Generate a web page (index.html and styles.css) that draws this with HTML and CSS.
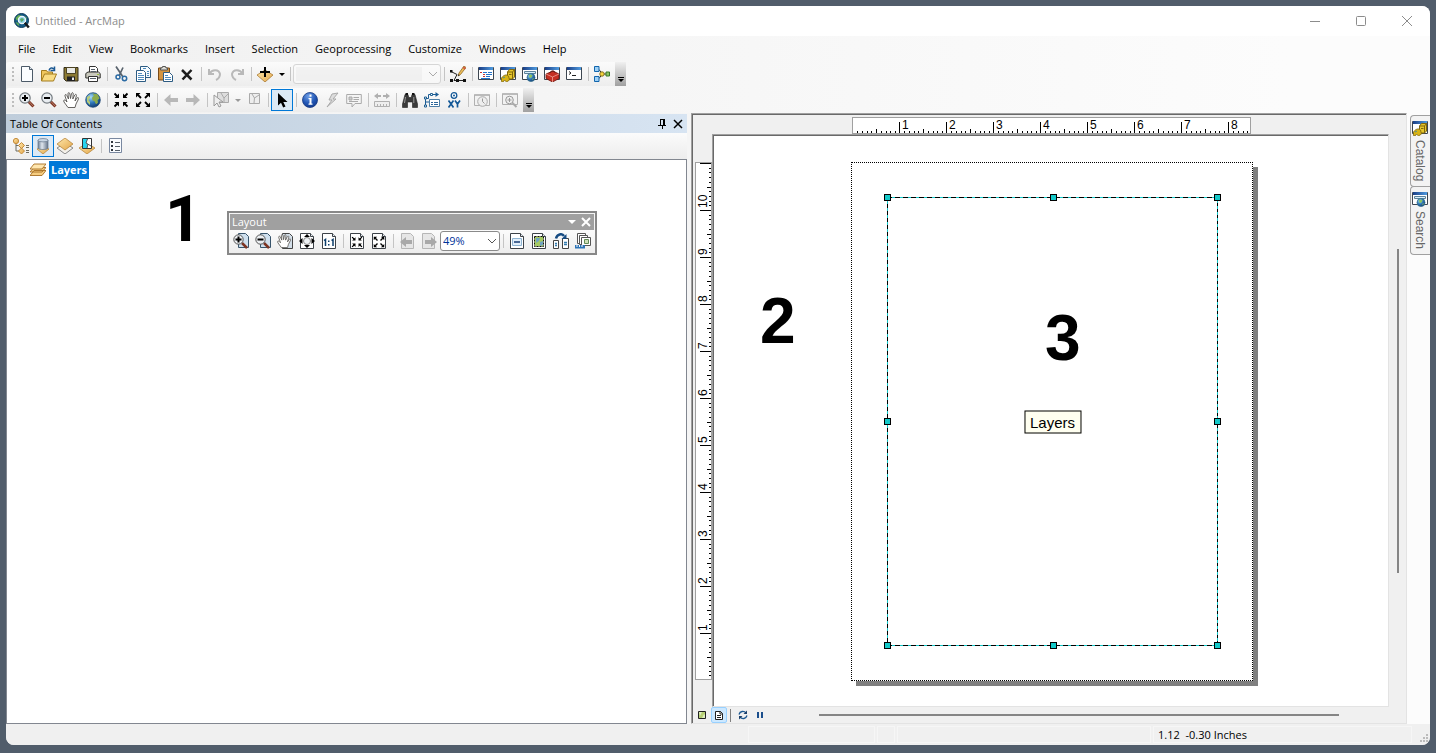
FILE: index.html
```html
<!DOCTYPE html>
<html lang="en">
<head>
<meta charset="utf-8">
<title>Untitled - ArcMap</title>
<link rel="stylesheet" href="styles.css">
</head>
<body>
<svg class="defs" aria-hidden="true">
  <defs>
    <radialGradient id="gGlobe" cx=".35" cy=".3" r=".8"><stop offset="0" stop-color="#a9dcf5"/><stop offset=".5" stop-color="#2f77b8"/><stop offset="1" stop-color="#0c2f66"/></radialGradient>
    <radialGradient id="gInfo" cx=".4" cy=".25" r=".8"><stop offset="0" stop-color="#6f9fe6"/><stop offset=".6" stop-color="#2156b5"/><stop offset="1" stop-color="#12398a"/></radialGradient>
    <linearGradient id="gGold" x2="1" y2="1"><stop offset="0" stop-color="#ffe9ae"/><stop offset="1" stop-color="#e2a548"/></linearGradient>
    <linearGradient id="gBar"><stop offset="0" stop-color="#1c3f86"/><stop offset="1" stop-color="#4f9be0"/></linearGradient>
    <linearGradient id="gCyl"><stop offset="0" stop-color="#6f7f93"/><stop offset=".4" stop-color="#dfe6ee"/><stop offset="1" stop-color="#66758a"/></linearGradient>
    <pattern id="ticksH" width="47" height="15" patternUnits="userSpaceOnUse">
      <path d="M4.500 13v2M9.500 13v2M14.500 13v2M18.500 13v2M23.500 11v4M28.500 13v2M33.500 13v2M37.500 13v2M42.500 13v2M46.500 4v11" stroke="#000" fill="none"/>
    </pattern>
    <pattern id="ticksV" width="15" height="47" y="1" patternUnits="userSpaceOnUse">
      <path d="M4 .5h11M13 5.500h2M13 9.500h2M13 14.500h2M13 19.500h2M11 24.500h4M13 28.500h2M13 33.500h2M13 38.500h2M13 42.500h2" stroke="#000" fill="none"/>
    </pattern>
  </defs>

  <symbol id="arcmap" viewBox="0 0 16 16"><circle cx="7.500" cy="7.500" r="7" fill="#155a86" stroke="#0d3a5a"/><path d="M1.500 5l3-3 3 .5-2 3-3 2zM1.500 9l3 1 1 3-2-1zM11 3l2 2-1 1z" fill="#63ad55"/><circle cx="8" cy="7" r="3.600" fill="#8fd3ea" stroke="#f2f6f8" stroke-width="1.300"/><path d="M6 6l2-1 2 1-1 2-2 1z" fill="#5ba868"/><path d="M10.800 9.800l4 4.700" stroke="#15191d" stroke-width="2.500"/></symbol>
  <symbol id="new" viewBox="0 0 16 16"><path d="M2.500.5h8l3 3v12h-11z" fill="#fbfdff" stroke="#4c5a68"/><path d="M10.500.5v3h3" fill="#dfe8f0" stroke="#4c5a68"/></symbol>
  <symbol id="open" viewBox="0 0 16 16"><path d="M.5 15V4.500h5l1 1.500h5v3" fill="#f0c75e" stroke="#a37c1f"/><path d="M.5 15l3-7h12l-3 7z" fill="#f9dc84" stroke="#a37c1f"/><path d="M8 4.500c1-3 3-3 5-1.500M13.500.500v4h-4" fill="none" stroke="#1d5a94" stroke-width="1.500"/></symbol>
  <symbol id="save" viewBox="0 0 16 16"><path d="M1 1.500h14v13.500H3L1 13z" fill="#8c7a32" stroke="#332c1a"/><path d="M3.500 1.500h9v6h-9z" fill="#e9e9e4" stroke="#4c4424"/><path d="M4 10.500h8V15H4z" fill="#222"/><path d="M9 11.500h2V14H9z" fill="#eee"/></symbol>
  <symbol id="print" viewBox="0 0 16 16"><path d="M4.500 7V.5h6l2 2V7" fill="#fff" stroke="#333"/><path d="M.8 7.500L3 6h10.500l1.700 1.500V12H.8z" fill="#c9c9bd" stroke="#30302c"/><path d="M3.500 10.500h9v5h-9z" fill="#fff" stroke="#333"/><path d="M5 12.500h6M6 3.500h4M6 5.500h5" stroke="#57606a"/><path d="M12 8h2v1h-2z" fill="#9bc43c"/></symbol>
  <symbol id="cut" viewBox="0 0 16 16"><path d="M3 .5l7 10.500M10 1.500L6 10" stroke="#59636d" stroke-width="1.700"/><circle cx="5" cy="11" r="2" fill="none" stroke="#2a6aa3" stroke-width="1.500"/><circle cx="11.500" cy="12.500" r="2.200" fill="none" stroke="#2a6aa3" stroke-width="1.500"/></symbol>
  <symbol id="copy" viewBox="0 0 16 16"><path d="M5.500.5h7l3 3v8h-10z" fill="#f5fbff" stroke="#2d5c83"/><path d="M1.500 4.500h7l2 2v9h-9z" fill="#fff" stroke="#2d5c83"/><path d="M3 7.500h4M3 9.500h6M3 11.500h6M3 13.500h6M8 2.500h3M12 5.500h2M12 7.500h2M12 9.500h2" stroke="#4e8bbd"/></symbol>
  <symbol id="paste" viewBox="0 0 16 16"><path d="M1.500 2h11v12h-11z" fill="#d39441" stroke="#794b18"/><path d="M3.500 4h7V2H9L8.500.5h-3L5 2H3.500z" fill="#dcdcd6" stroke="#555"/><path d="M6.500 6.500h6l3 3v6h-9z" fill="#fff" stroke="#2d5c83"/><path d="M8 9.500h3M8 11.500h6M8 13.500h6" stroke="#4e8bbd"/></symbol>
  <symbol id="delete" viewBox="0 0 16 16"><path d="M3 4l9.500 9.500M12.500 4L3.500 13.500" stroke="#1d1d1d" stroke-width="2.500"/></symbol>
  <symbol id="undo" viewBox="0 0 16 16"><path d="M2 3v5h5M2.500 7.500C5 3 12 3 13 8c0 3-2 5-4 6" fill="none" stroke="#b9b9b9" stroke-width="2"/></symbol>
  <symbol id="redo" viewBox="0 0 16 16"><path d="M14 3v5H9M13.500 7.500C11 3 4 3 3 8c0 3 2 5 4 6" fill="none" stroke="#b9b9b9" stroke-width="2"/></symbol>
  <symbol id="add" viewBox="0 0 16 16"><path d="M0 9l8-5 8 5-8 7z" fill="url(#gGold)" stroke="#a97932" stroke-width=".8"/><path d="M8 1v10M3 6h10" stroke="#000" stroke-width="2"/></symbol>
  <symbol id="editor" viewBox="0 0 16 16"><path d="M1 5.500l6 3L4 14.500h11" stroke="#222" fill="none"/><path d="M0 4h2.500v2.500H0zM0 13h3v3H0zM6 13h3v3H6zM13 13h3v3h-3z" fill="#111"/><path d="M8 10l1-3 5-7 2 1.500-5.500 7z" fill="#edbd58" stroke="#8f6a2a" stroke-width=".8"/><path d="M13.500.5l2.500 1.500-1 1.500-2.500-1.500z" fill="#d05a43"/><path d="M8 10l.5-1.800 1.300 1z" fill="#222"/></symbol>
  <symbol id="win" viewBox="0 0 16 16"><path d="M.5 1.500h15v12H.5z" fill="#fff" stroke="#3d4650"/><path d="M1 1h14v3H1z" fill="url(#gBar)"/></symbol>
  <symbol id="toc" viewBox="0 0 16 16"><use href="#win"/><path d="M2 6.500h2M5 8.500h2M5 10.500h2" stroke="#c33"/><path d="M5 6.500h4M10 6.500h4M8 8.500h6M8 10.500h4M3 12.500h9" stroke="#2472c8"/></symbol>
  <symbol id="catalog" viewBox="0 0 16 16"><use href="#win"/><path d="M7.500 6l2-2.500h5V11l-2 2h-5z" fill="#e5c62c" stroke="#80660b"/><path d="M7.500 6h5v7M12.500 6l2-2.500M9 8.500h2.500" fill="none" stroke="#80660b"/><path d="M1.500 12c2-3 5-4 7-2l1 4-3 2-2-2-1.500 2-1.500-.5z" fill="#d8b415" stroke="#80660b" stroke-width=".8"/><path d="M3 12l2-1" stroke="#4b8e94"/></symbol>
  <symbol id="search" viewBox="0 0 16 16"><use href="#win"/><path d="M2.500 5.500h11v2h-11z" fill="#d9effb" stroke="#5d8299"/><circle cx="9" cy="11.500" r="4" fill="url(#gGlobe)" stroke="#36718e" stroke-width=".8"/><path d="M7 9l2-.5 1.500 1-1 2-2 .5zM10 13l2-1-1 2z" fill="#8dc35c"/></symbol>
  <symbol id="toolbox" viewBox="0 0 16 16"><use href="#win"/><path d="M2 8l7-3 6 3v4.500L8.500 16 2 12.500z" fill="#c52f22" stroke="#6f1610" stroke-width=".8"/><path d="M2 8l6.500 3L15 8M8.500 11v5" stroke="#f2a294" stroke-width=".8" fill="none"/><path d="M6 7c0-2 4-3 5-.5" fill="none" stroke="#591009"/></symbol>
  <symbol id="python" viewBox="0 0 16 16"><use href="#win"/><path d="M3 5.500l2 1.500-2 1.500M6 9.500h4" fill="none" stroke="#222"/></symbol>
  <symbol id="model" viewBox="0 0 16 16"><path d="M3 3.500h2l3 4M3 12.500h2l3-4M8 8h6" stroke="#333" fill="none"/><path d="M.5.500h4.500v5H.5zM.5 10.500H5v5H.5z" fill="#9ed0f5" stroke="#1266ad"/><circle cx="8" cy="8" r="2.200" fill="#f6d33c" stroke="#80701e"/><path d="M12 6h3.500v4H12z" fill="#8cc466" stroke="#367628"/></symbol>

  <symbol id="lens" viewBox="0 0 16 16"><path d="M9.500 9.500l5 5" stroke="#7d3422" stroke-width="3"/><path d="M10 9.500l4.500 5" stroke="#c6907b" stroke-width=".8"/><circle cx="6" cy="6" r="5.200" fill="#e9edf1" stroke="#747b80" stroke-width="1.200"/></symbol>
  <symbol id="zoomin" viewBox="0 0 16 16"><use href="#lens"/><path d="M6 3v6M3 6h6" stroke="#000" stroke-width="2"/></symbol>
  <symbol id="zoomout" viewBox="0 0 16 16"><use href="#lens"/><path d="M3 6h6" stroke="#000" stroke-width="2"/></symbol>
  <symbol id="pan" viewBox="0 0 16 16"><path d="M5 15.500L1 10c-1-2 .5-2.500 1.500-1.500L4 10 2 4c-.3-1.800 1.200-2 1.800-.6L5.500 7 5 1.800C5 .2 6.500.2 6.800 1.800L7.500 6.500 8.500 1.500C9 .2 10.400.5 10.200 2L9.800 7l2-4c.8-1.200 2-.6 1.600.7L12 9l2-3c1-1 2-.2 1.500 1L13 12l-1 3.500z" fill="#fff" stroke="#54514e" stroke-width=".9"/></symbol>
  <symbol id="globe" viewBox="0 0 16 16"><circle cx="8" cy="8" r="7.300" fill="url(#gGlobe)" stroke="#234c78" stroke-width=".8"/><path d="M7.500 1.500l5 .8 2 4-2 2 .5 2.500-2 1.500-1.500-3-2-1-.5-2.500 2-2z" fill="#8bab4b"/><path d="M2 5l3-1.500v2L3.500 8l1.500 2v3L2 10z" fill="#b8cc78"/></symbol>
  <symbol id="shrink" viewBox="0 0 16 16"><path d="M1.500 1.500l3 3M14.500 1.500l-3 3M1.500 14.500l3-3M14.500 14.500l-3-3" stroke="#000" stroke-width="1.800"/><path d="M6 1.500V6H1.500zM10 1.500V6h4.500zM6 14.500V10H1.500zM10 14.500V10h4.500z"/></symbol>
  <symbol id="grow" viewBox="0 0 16 16"><path d="M3 3l3 3M13 3l-3 3M3 13l3-3M13 13l-3-3" stroke="#000" stroke-width="1.800"/><path d="M1 1h4.500L1 5.500zM15 1h-4.500L15 5.500zM1 15h4.500L1 10.500zM15 15h-4.500l4.500-4.500z"/></symbol>
  <symbol id="back" viewBox="0 0 16 16"><path d="M1 8l6.500-6v4H15v4H7.500v4z" fill="#b8b8b8"/></symbol>
  <symbol id="fwd" viewBox="0 0 16 16"><path d="M15 8L8.500 2v4H1v4h7.500v4z" fill="#b8b8b8"/></symbol>
  <symbol id="selfeat" viewBox="0 0 16 16"><path d="M4.500.5h11v10h-11z" fill="#ddd" stroke="#aaa"/><path d="M8 1l3 5 4-4M11 6v4" fill="none" stroke="#aaa"/><path d="M1 3v11l3-3 2 4 2-1-2-4h4z" fill="#eee" stroke="#999"/></symbol>
  <symbol id="clearsel" viewBox="0 0 16 16"><path d="M3.500 1.500h10v10h-10z" fill="#eee" stroke="#aaa"/><path d="M6 2l2.500 4L13 3M8.500 6L8 11" fill="none" stroke="#aaa"/></symbol>
  <symbol id="arrow" viewBox="0 0 16 16"><path d="M4 1v12.500l3-2.700 2.200 4.700 2.300-1-2.200-4.600h4.200z" fill="#000"/></symbol>
  <symbol id="info" viewBox="0 0 16 16"><circle cx="8" cy="8" r="7.500" fill="url(#gInfo)" stroke="#173a83" stroke-width=".8"/><path d="M7.500 2.500h2v2.200h-2zM6.500 6h3v5.500h1v1.300h-4v-1.300h1V7.300h-1z" fill="#fff"/></symbol>
  <symbol id="bolt" viewBox="0 0 16 16"><path d="M14 1L8 2 5 8h3l-5 7 9-8H9z" fill="#ddd" stroke="#aaa"/></symbol>
  <symbol id="popup" viewBox="0 0 16 16"><path d="M.7 2.500h14.600v9H9l-3 3.500v-3.500H.7z" fill="#f4f4f4" stroke="#aaa"/><path d="M3 5h3v3H3zM7.500 5.500H13M7.500 7.500H13M3 9.500h9" stroke="#aaa" fill="#ccc"/></symbol>
  <symbol id="measure" viewBox="0 0 16 16"><path d="M.5 9.500h15v5H.5z" fill="#eee" stroke="#b0b0b0"/><path d="M3.500 12v2M6.500 12v2M9.500 12v2M12.500 12v2M1 4h5M10 4h5" stroke="#b0b0b0"/><path d="M4 1L0 4l4 3zM12 1l4 3-4 3zM4 3h3v2H4zM9 3h3v2H9z" fill="#b0b0b0"/></symbol>
  <symbol id="find" viewBox="0 0 16 16"><path d="M3 2.500h3l.8 3h2.400l.8-3h3l2.500 9.500v3.500h-5V10h-5v5.500h-5V12z" fill="#3a3a3a" stroke="#222" stroke-width=".6"/><path d="M3.500 1h2.500v2H3.500zM10 1h2.500v2H10z" fill="#111"/><path d="M2.500 11l1-6M11.800 11V5" stroke="#9a9a9a"/></symbol>
  <symbol id="route" viewBox="0 0 16 16"><path d="M1.500 14V6.500h3V2.500h8M2 10h3" fill="none" stroke="#1c5d95"/><path d="M11.500 0l3.500 2.500-3.500 2.500z" fill="#1c5d95"/><path d="M.5 5h2v2h-2zM6.500 1.500h2v2h-2zM.5 13h2v2h-2z" fill="#fff" stroke="#1f5f92"/><path d="M5.500 7.500h10v7h-10z" fill="#fff" stroke="#4d7ea6"/><path d="M7 10.500h2M10 10.500h4M7 12.500h2M10 12.500h4" stroke="#2b669a"/></symbol>
  <symbol id="gotoxy" viewBox="0 0 16 16"><circle cx="8" cy="3.500" r="2.800" fill="#fff" stroke="#155997" stroke-width="1.300"/><circle cx="8" cy="3.500" r="1" fill="#155997"/><path d="M2.500 8.500l5 7M7.500 8.500l-5 7M9 8.500l2.500 3.500 2.500-3.500M11.500 12v3.500" fill="none" stroke="#155997" stroke-width="1.700"/></symbol>
  <symbol id="clock" viewBox="0 0 16 16"><path d="M.5 2.500h15v11H.5z" fill="#f2f2f2" stroke="#b0b0b0"/><path d="M1 2h14v2H1z" fill="#bbb"/><circle cx="8.500" cy="9.500" r="4.800" fill="#eee" stroke="#aaa"/><path d="M8.500 6.500v3l2 2" fill="none" stroke="#999"/></symbol>
  <symbol id="viewer" viewBox="0 0 16 16"><path d="M.5 1.500h15v11H.5z" fill="#f2f2f2" stroke="#b0b0b0"/><path d="M1 1h14v2H1z" fill="#bbb"/><circle cx="7.500" cy="8" r="3.800" fill="#eee" stroke="#999"/><path d="M7.500 6v4M5.500 8h4" stroke="#999"/><path d="M10.500 11l4 4" stroke="#aaa" stroke-width="2"/></symbol>

  <symbol id="tocdraw" viewBox="0 0 16 16"><path d="M3 4v9h5M3 7.500h4M13 7.500h3M13 9.500h3M13 12.500h3M13 14.500h3" stroke="#6c6c60" fill="none"/><circle cx="3" cy="3" r="2.600" fill="url(#gGold)" stroke="#c48b3a"/><path d="M8.500 4.500l3 3-3 3-3-3zM8.500 10l3 3-3 3-3-3z" fill="url(#gGold)" stroke="#c48b3a"/></symbol>
  <symbol id="tocsrc" viewBox="0 0 16 16"><path d="M2 11l6-3 6 3-6 5z" fill="url(#gGold)" stroke="#b9883d" stroke-width=".8"/><path d="M3 2v8c0 2 10 2 10 0V2z" fill="url(#gCyl)" stroke="#66758a" stroke-width=".7"/><ellipse cx="8" cy="2.200" rx="5" ry="1.700" fill="#c9d6e4" stroke="#66758a" stroke-width=".7"/></symbol>
  <symbol id="tocvis" viewBox="0 0 16 16"><path d="M0 10l8-5 8 5-8 6z" fill="#f4f1ea" stroke="#888"/><path d="M0 6l8-6 8 6-8 6z" fill="url(#gGold)" stroke="#b9883d" stroke-width=".8"/></symbol>
  <symbol id="tocsel" viewBox="0 0 16 16"><path d="M0 10l8-5 8 5-8 6z" fill="url(#gGold)" stroke="#b9883d" stroke-width=".8"/><path d="M3.500.5h9v10h-9z" fill="#fff" stroke="#333"/><path d="M4 1h4.500L7 5l2 1-1 4H4z" fill="#26d3ee"/><path d="M8.500 1L7 5l5 3M9 6l-1 4" fill="none" stroke="#555"/></symbol>
  <symbol id="options" viewBox="0 0 16 16"><path d="M2.500.5h12v14h-12z" fill="#fafcff" stroke="#7988a0"/><path d="M4 3h2v2H4zM4 7h2v2H4zM4 11h2v2H4z" fill="#30363e"/><path d="M8 4.500h5M8 8.500h5M8 12.500h5" stroke="#58616c"/></symbol>
  <symbol id="layers" viewBox="0 0 16 16"><path d="M4 8.500h12l-4 5H0zM4 5.500h12l-4 4.500H0z" fill="#f6cd80" stroke="#a76f25" stroke-width=".9"/><path d="M4 2h12l-4 5H0z" fill="#ffe6ae" stroke="#a76f25" stroke-width=".9"/></symbol>

  <symbol id="sheet" viewBox="0 0 16 16"><path d="M1.500.5h10l3 3v12h-13z" fill="#fff" stroke="#3d4248"/><path d="M11.500.5v3h3" fill="#e8eef3" stroke="#3d4248"/></symbol>
  <symbol id="lzoomin" viewBox="0 0 16 16"><path d="M5.500.5h7l3 3v11h-10z" fill="#cfe0ee" stroke="#38546b"/><path d="M9 10l5 5" stroke="#7d3422" stroke-width="2.500"/><circle cx="5.500" cy="6.500" r="4.700" fill="#eceff2" stroke="#555"/><path d="M5.500 3.500v6M2.500 6.500h6" stroke="#000" stroke-width="2"/></symbol>
  <symbol id="lzoomout" viewBox="0 0 16 16"><path d="M5.500.5h7l3 3v11h-10z" fill="#cfe0ee" stroke="#38546b"/><path d="M9 10l5 5" stroke="#7d3422" stroke-width="2.500"/><circle cx="5.500" cy="6.500" r="4.700" fill="#eceff2" stroke="#555"/><path d="M2.500 6.500h6" stroke="#000" stroke-width="2"/></symbol>
  <symbol id="lpan" viewBox="0 0 16 16"><path d="M5.500.5h7l3 3v12h-10z" fill="#d3dee8" stroke="#444"/><use href="#pan" x="0" y="1" width="14" height="14"/></symbol>
  <symbol id="lfull" viewBox="0 0 16 16"><use href="#sheet"/><path d="M8 1l3 3H5zM8 15l3-3H5zM0 8l3.500-3v6zM16 8l-3.500-3v6z" fill="#000"/><circle cx="8" cy="8" r="3.500" fill="#eef2f5" stroke="#888"/></symbol>
  <symbol id="lone" viewBox="0 0 16 16"><use href="#sheet"/><path d="M3 7.500L4.500 6.500V13M10.500 7.500L12 6.500V13" fill="none" stroke="#0b3c6a" stroke-width="1.500"/><path d="M7 7.500h1.500V9H7zM7 11h1.500v1.500H7z" fill="#0b3c6a"/></symbol>
  <symbol id="lshrink" viewBox="0 0 16 16"><use href="#sheet"/><use href="#shrink" x="2" y="3" width="12" height="12"/></symbol>
  <symbol id="lgrow" viewBox="0 0 16 16"><use href="#sheet"/><use href="#grow" x="2" y="3" width="12" height="12"/></symbol>
  <symbol id="lback" viewBox="0 0 16 16"><path d="M2.500.5h9l3 3v12h-12z" fill="#e6e6e6" stroke="#b6b6b6"/><path d="M1 9l6-5v3h6v4H7v3z" fill="#a9a9a9"/></symbol>
  <symbol id="lfwd" viewBox="0 0 16 16"><path d="M1.500.5h9l3 3v12h-12z" fill="#e6e6e6" stroke="#b6b6b6"/><path d="M16 9l-6-5v3H4v4h6v3z" fill="#a9a9a9"/></symbol>
  <symbol id="ldraft" viewBox="0 0 16 16"><use href="#sheet"/><path d="M3.500 5.500h9v7h-9z" fill="#e2effa" stroke="#8fb4d2"/><path d="M5 9h6" stroke="#153a73" stroke-width="1.500"/></symbol>
  <symbol id="lfocus" viewBox="0 0 16 16"><use href="#sheet"/><path d="M3.500 3.500h9v10h-9z" fill="#a5ca62" stroke="#111" stroke-dasharray="2 1"/><path d="M5 5h4l-1 3-3 2zM9 9l3-1v4l-3 1z" fill="#71a4bf"/></symbol>
  <symbol id="lchange" viewBox="0 0 16 16"><path d="M.5 7.500h5v8h-5zM9.500 5.500h6v10h-6z" fill="#fff" stroke="#444"/><path d="M2 10.500h2M2 12.500h2M11 9.500h3M11 11.500h3" stroke="#357cae" stroke-width="1.500"/><path d="M3 5.500C4 1 9 0 11 3" fill="none" stroke="#174c83" stroke-width="2.500"/><path d="M13.500 1v5H8.500z" fill="#174c83"/></symbol>
  <symbol id="lpages" viewBox="0 0 16 16"><path d="M2.500.5h8v10h-8z" fill="#fff" stroke="#555"/><path d="M4.500 2.500h8v9h-8z" fill="#fff" stroke="#555"/><path d="M6.500 4.500h9v8h-9z" fill="#fff" stroke="#555"/><path d="M9.500 6.500h4v4h-4z" fill="#cfe0b8" stroke="#638a54"/><path d="M0 12h10v3.500H0z" fill="#2e75b7"/><path d="M2 12v2M4.500 12v2M7 12v2" stroke="#fff"/></symbol>
  <symbol id="chev" viewBox="0 0 10 10"><path d="M1 3l4 4 4-4" fill="none" stroke="currentColor"/></symbol>
</svg>

<div class="window">
  <header class="titlebar">
    <svg class="icon"><use href="#arcmap"/></svg>
    <h1 class="title">Untitled - ArcMap</h1>
    <div class="winbuttons">
      <button class="winbtn" aria-label="Minimize"><svg viewBox="0 0 12 12"><path d="M1 6.500h10"/></svg></button>
      <button class="winbtn" aria-label="Maximize"><svg viewBox="0 0 12 12"><rect x="1.500" y="1.500" width="9" height="9" rx="1"/></svg></button>
      <button class="winbtn" aria-label="Close"><svg viewBox="0 0 12 12"><path d="M1 1l10 10M11 1L1 11"/></svg></button>
    </div>
  </header>

  <div class="chrome">
    <nav class="menubar">
      <button>File</button><button>Edit</button><button>View</button><button>Bookmarks</button><button>Insert</button><button>Selection</button><button>Geoprocessing</button><button>Customize</button><button>Windows</button><button>Help</button>
    </nav>

    <div class="toolbar" role="toolbar" aria-label="Standard">
      <span class="grip"></span>
      <button class="tool" aria-label="New"><svg class="icon"><use href="#new"/></svg></button>
      <button class="tool" aria-label="Open"><svg class="icon"><use href="#open"/></svg></button>
      <button class="tool" aria-label="Save"><svg class="icon"><use href="#save"/></svg></button>
      <button class="tool" aria-label="Print"><svg class="icon"><use href="#print"/></svg></button>
      <span class="sep"></span>
      <button class="tool" aria-label="Cut"><svg class="icon"><use href="#cut"/></svg></button>
      <button class="tool" aria-label="Copy"><svg class="icon"><use href="#copy"/></svg></button>
      <button class="tool" aria-label="Paste"><svg class="icon"><use href="#paste"/></svg></button>
      <button class="tool" aria-label="Delete"><svg class="icon"><use href="#delete"/></svg></button>
      <span class="sep"></span>
      <button class="tool" aria-label="Undo"><svg class="icon"><use href="#undo"/></svg></button>
      <button class="tool" aria-label="Redo"><svg class="icon"><use href="#redo"/></svg></button>
      <span class="sep"></span>
      <button class="tool" aria-label="Add data"><svg class="icon"><use href="#add"/></svg></button>
      <button class="drop" aria-label="Add data options"></button>
      <span class="sep"></span>
      <div class="combo scale"><select aria-label="Map scale" disabled><option></option></select><svg><use href="#chev"/></svg></div>
      <span class="sep"></span>
      <button class="tool" aria-label="Editor toolbar"><svg class="icon"><use href="#editor"/></svg></button>
      <span class="sep"></span>
      <button class="tool" aria-label="Table of contents"><svg class="icon"><use href="#toc"/></svg></button>
      <button class="tool" aria-label="Catalog window"><svg class="icon"><use href="#catalog"/></svg></button>
      <button class="tool" aria-label="Search window"><svg class="icon"><use href="#search"/></svg></button>
      <button class="tool" aria-label="Toolbox"><svg class="icon"><use href="#toolbox"/></svg></button>
      <button class="tool" aria-label="Python"><svg class="icon"><use href="#python"/></svg></button>
      <span class="sep"></span>
      <button class="tool" aria-label="Model builder"><svg class="icon"><use href="#model"/></svg></button>
      <button class="overflow" aria-label="Toolbar options"></button>
    </div>

    <div class="toolbar" role="toolbar" aria-label="Tools">
      <span class="grip"></span>
      <button class="tool" aria-label="Zoom in"><svg class="icon"><use href="#zoomin"/></svg></button>
      <button class="tool" aria-label="Zoom out"><svg class="icon"><use href="#zoomout"/></svg></button>
      <button class="tool" aria-label="Pan"><svg class="icon"><use href="#pan"/></svg></button>
      <button class="tool" aria-label="Full extent"><svg class="icon"><use href="#globe"/></svg></button>
      <span class="sep"></span>
      <button class="tool" aria-label="Fixed zoom in"><svg class="icon"><use href="#shrink"/></svg></button>
      <button class="tool" aria-label="Fixed zoom out"><svg class="icon"><use href="#grow"/></svg></button>
      <span class="sep"></span>
      <button class="tool" aria-label="Back"><svg class="icon"><use href="#back"/></svg></button>
      <button class="tool" aria-label="Forward"><svg class="icon"><use href="#fwd"/></svg></button>
      <span class="sep"></span>
      <button class="tool" aria-label="Select features"><svg class="icon"><use href="#selfeat"/></svg></button>
      <button class="drop dim" aria-label="Select options"></button>
      <button class="tool" aria-label="Clear selection"><svg class="icon"><use href="#clearsel"/></svg></button>
      <span class="sep"></span>
      <button class="tool on" aria-label="Select elements"><svg class="icon"><use href="#arrow"/></svg></button>
      <span class="sep"></span>
      <button class="tool" aria-label="Identify"><svg class="icon"><use href="#info"/></svg></button>
      <button class="tool" aria-label="Hyperlink"><svg class="icon"><use href="#bolt"/></svg></button>
      <button class="tool" aria-label="HTML popup"><svg class="icon"><use href="#popup"/></svg></button>
      <span class="sep"></span>
      <button class="tool" aria-label="Measure"><svg class="icon"><use href="#measure"/></svg></button>
      <span class="sep"></span>
      <button class="tool" aria-label="Find"><svg class="icon"><use href="#find"/></svg></button>
      <button class="tool" aria-label="Find route"><svg class="icon"><use href="#route"/></svg></button>
      <button class="tool" aria-label="Go to XY"><svg class="icon"><use href="#gotoxy"/></svg></button>
      <span class="sep"></span>
      <button class="tool" aria-label="Time slider"><svg class="icon"><use href="#clock"/></svg></button>
      <span class="sep"></span>
      <button class="tool" aria-label="Viewer window"><svg class="icon"><use href="#viewer"/></svg></button>
      <button class="overflow" aria-label="Toolbar options"></button>
    </div>
  </div>

  <main class="work">
    <section class="contents">
      <header class="panelhead">
        <h2>Table Of Contents</h2>
        <button aria-label="Pin"><svg viewBox="0 0 10 10"><path d="M3.500 1v5M6.500 1v5M7.500 1v5M3 .5h5M1 6.500h8M5.500 7v3"/></svg></button>
        <button aria-label="Close"><svg viewBox="0 0 10 10"><path d="M1 1l8 8M9 1L1 9" stroke-width="1.500"/></svg></button>
      </header>
      <div class="contentbar" role="toolbar" aria-label="Contents views">
        <button class="tool" aria-label="List by drawing order"><svg class="icon"><use href="#tocdraw"/></svg></button>
        <button class="tool on" aria-label="List by source"><svg class="icon"><use href="#tocsrc"/></svg></button>
        <button class="tool" aria-label="List by visibility"><svg class="icon"><use href="#tocvis"/></svg></button>
        <button class="tool" aria-label="List by selection"><svg class="icon"><use href="#tocsel"/></svg></button>
        <span class="sep"></span>
        <button class="tool" aria-label="Options"><svg class="icon"><use href="#options"/></svg></button>
      </div>
      <ul class="tree">
        <li><svg class="icon"><use href="#layers"/></svg><span class="picked">Layers</span></li>
      </ul>
      <span class="note note-one">1</span>
      <section class="floatbar">
        <header><h2>Layout</h2><button class="drop light" aria-label="Options"></button><button class="shut" aria-label="Close"><svg viewBox="0 0 10 10"><path d="M1 1l8 8M9 1L1 9"/></svg></button></header>
        <div class="floattools" role="toolbar" aria-label="Layout">
          <button class="tool" aria-label="Zoom in"><svg class="icon"><use href="#lzoomin"/></svg></button>
          <button class="tool" aria-label="Zoom out"><svg class="icon"><use href="#lzoomout"/></svg></button>
          <button class="tool" aria-label="Pan"><svg class="icon"><use href="#lpan"/></svg></button>
          <button class="tool" aria-label="Whole page"><svg class="icon"><use href="#lfull"/></svg></button>
          <button class="tool" aria-label="Actual size"><svg class="icon"><use href="#lone"/></svg></button>
          <span class="sep"></span>
          <button class="tool" aria-label="Fixed zoom in"><svg class="icon"><use href="#lshrink"/></svg></button>
          <button class="tool" aria-label="Fixed zoom out"><svg class="icon"><use href="#lgrow"/></svg></button>
          <span class="sep"></span>
          <button class="tool" aria-label="Back"><svg class="icon"><use href="#lback"/></svg></button>
          <button class="tool" aria-label="Forward"><svg class="icon"><use href="#lfwd"/></svg></button>
          <div class="combo percent"><select aria-label="Zoom percent"><option>49%</option></select><svg><use href="#chev"/></svg></div>
          <span class="sep"></span>
          <button class="tool" aria-label="Draft mode"><svg class="icon"><use href="#ldraft"/></svg></button>
          <button class="tool" aria-label="Focus data frame"><svg class="icon"><use href="#lfocus"/></svg></button>
          <button class="tool" aria-label="Change layout"><svg class="icon"><use href="#lchange"/></svg></button>
          <button class="tool" aria-label="Data driven pages"><svg class="icon"><use href="#lpages"/></svg></button>
        </div>
      </section>
    </section>

    <section class="view">
      <div class="hruler">
        <svg class="hscale" aria-label="Horizontal ruler">
          <rect width="100%" height="15" fill="url(#ticksH)"/>
          <text x="49" y="11">1</text><text x="96" y="11">2</text><text x="143" y="11">3</text><text x="190" y="11">4</text><text x="237" y="11">5</text><text x="284" y="11">6</text><text x="331" y="11">7</text><text x="378" y="11">8</text>
        </svg>
      </div>
      <div class="vruler">
        <svg class="vscale" viewBox="0 -516 15 516" aria-label="Vertical ruler">
          <rect y="-516" width="15" height="516" fill="url(#ticksV)"/>
          <g transform="rotate(-90)"><text x="48" y="11">1</text><text x="95" y="11">2</text><text x="142" y="11">3</text><text x="189" y="11">4</text><text x="236" y="11">5</text><text x="283" y="11">6</text><text x="330" y="11">7</text><text x="377" y="11">8</text><text x="424" y="11">9</text><text x="471" y="11">10</text></g>
        </svg>
      </div>
      <div class="canvas">
        <div class="page">
          <div class="frame">
            <i class="handle nw"></i><i class="handle n"></i><i class="handle ne"></i><i class="handle w"></i><i class="handle e"></i><i class="handle sw"></i><i class="handle s"></i><i class="handle se"></i>
            <span class="framename">Layers</span>
          </div>
        </div>
        <span class="note note-two">2</span>
        <span class="note note-three">3</span>
      </div>
      <div class="vscroll"><div class="vthumb"></div></div>
      <div class="viewfoot">
        <button class="mini" aria-label="Data view"><svg viewBox="0 0 12 12"><path d="M2.500 2.500h7v7h-7z" fill="#b6cf73" stroke="#222"/><path d="M3 3h3L4 7zM8 5l1 1v3H6z" fill="#dfeec0"/></svg></button>
        <button class="mini chosen" aria-label="Layout view"><svg viewBox="0 0 12 12"><path d="M2.500 2.500h5l2 2v6h-7z" fill="#fff" stroke="#222"/><path d="M7 2v3h3M4 6.500h4M4 8.500h4" stroke="#222" fill="none"/></svg></button>
        <span class="bar"></span>
        <button class="mini" aria-label="Refresh"><svg viewBox="0 0 12 12"><path d="M2 5.500C3 2 7 1.500 9 4M10 6.500C9 10 5 10.500 3 8" fill="none" stroke="#1b5791" stroke-width="1.300"/><path d="M10 1.500V5H6.500zM2 10.500V7h3.500z" fill="#1b3f6b"/></svg></button>
        <button class="mini" aria-label="Pause drawing"><svg viewBox="0 0 12 12"><path d="M3 3h2v6H3zM7 3h2v6H7z" fill="#1b4f8c"/></svg></button>
        <div class="hscroll"><div class="hthumb"></div></div>
      </div>
    </section>

    <aside class="tabs">
      <button><svg class="icon"><use href="#catalog"/></svg><span>Catalog</span></button>
      <button><svg class="icon"><use href="#search"/></svg><span>Search</span></button>
    </aside>
  </main>

  <footer class="status">
    <span class="cell wide"></span><span class="cell small"></span><span class="cell rest"></span>
    <output class="cell coords">1.12&nbsp; -0.30 Inches</output>
    <svg class="sizer" viewBox="0 0 9 9"><path d="M6 0h2v2H6zM3 3h2v2H3zM6 3h2v2H6zM0 6h2v2H0zM3 6h2v2H3zM6 6h2v2H6z"/></svg>
  </footer>
</div>
</body>
</html>
```
FILE: styles.css
```css
* { box-sizing: border-box; }

body {
  margin: 0;
  height: 100vh;
  padding: 6px 6px 8px;
  background: #515d6b;
  font: 11px/16px "Open Sans", "Noto Sans", sans-serif;
  color: #000;
}

button {
  margin: 0;
  padding: 0;
  border: 0;
  background: none;
  font: inherit;
  color: inherit;
}

h1, h2 { margin: 0; font: inherit; }

svg { display: block; flex: none; }

.defs { position: absolute; width: 0; height: 0; }

.icon { width: 16px; height: 16px; }

.window {
  height: 100%;
  display: flex;
  flex-direction: column;
  border-radius: 8px;
  overflow: hidden;
  background: #f0f0f0;
}

.titlebar {
  display: flex;
  align-items: center;
  gap: 5px;
  height: 30px;
  padding-left: 8px;
  background: #fff;
  color: #8c8c8c;
}

.winbuttons { display: flex; margin-left: auto; }

.winbtn {
  width: 46px;
  height: 28px;
  display: grid;
  place-items: center;
}

.winbtn svg { width: 12px; height: 12px; fill: none; stroke: #8c8c8c; }

.chrome { background: linear-gradient(90deg, #f0f0f0, #fcfcfc 90%); }

.menubar {
  display: flex;
  gap: 17px;
  height: 26px;
  padding-left: 12px;
}

.toolbar {
  display: flex;
  align-items: center;
  width: max-content;
  height: 24px;
  margin-bottom: 2px;
  background: linear-gradient(#fbfbfb, #ededed);
  border-radius: 3px;
}

.toolbar:last-child { margin-bottom: 1px; }

.grip {
  width: 2px;
  height: 14px;
  margin: 0 2px 0 6px;
  background: repeating-linear-gradient(#bdbdbd 0 2px, transparent 2px 4px);
}

.tool {
  width: 22px;
  height: 22px;
  display: grid;
  place-items: center;
  flex: none;
}

.on { border: 1px solid #0078d7; background: #dce9f5; }

.sep {
  width: 1px;
  height: 14px;
  margin: 0 2px 0 3px;
  background: #c4c4c4;
  flex: none;
}

.drop { width: 11px; height: 22px; display: grid; place-items: center; }

.drop::before {
  content: "";
  border: 3px solid transparent;
  border-top-color: #000;
  border-bottom: 0;
}

.dim::before { border-top-color: #999; }
.light::before { border-width: 4px 4px 0; border-top-color: #fff; }

.combo { position: relative; flex: none; }

.combo select {
  appearance: none;
  width: 100%;
  height: 20px;
  padding: 0 2px;
  border: 1px solid #8a8a8a;
  border-radius: 3px;
  background: #fff;
  font: inherit;
  color: #003399;
  display: block;
}

.combo svg {
  position: absolute;
  right: 3px;
  top: 5px;
  width: 10px;
  height: 10px;
  color: #555;
  pointer-events: none;
}

.scale { width: 148px; }
.scale select {
  border-color: #c8c8c8;
  background: #f0f0f0;
  box-shadow: inset -18px 0 0 #fbfbfb, inset 0 0 0 2px #fbfbfb;
}
.scale svg { color: #aaa; }
.percent { width: 60px; }

.overflow {
  align-self: stretch;
  width: 11px;
  margin-left: 2px;
  padding-bottom: 4px;
  background: linear-gradient(#f0f0f0, #a0a0a0);
  display: flex;
  flex-direction: column;
  align-items: center;
  justify-content: flex-end;
  gap: 1px;
}

.overflow::before {
  content: "";
  width: 6px;
  height: 1px;
  background: #000;
}

.overflow::after {
  content: "";
  border: 3px solid transparent;
  border-top-color: #000;
  border-bottom: 0;
}

/* docked panels */

.work {
  flex: 1;
  min-height: 0;
  display: grid;
  grid-template-columns: 685fr 716fr 23px;
  background: #f5f5f5;
}

.contents {
  position: relative;
  display: flex;
  flex-direction: column;
  min-width: 0;
  padding: 1px 4px 0 0;
}

.panelhead {
  display: flex;
  align-items: center;
  gap: 6px;
  height: 19px;
  padding: 0 4px;
  background: linear-gradient(90deg, #bfcddb, #d7e4f2);
}

.panelhead h2 { flex: 1; }
.panelhead button { width: 10px; height: 10px; }
.panelhead svg { width: 10px; height: 10px; fill: none; stroke: #000; }

.contentbar {
  display: flex;
  align-items: center;
  height: 26px;
  padding-left: 4px;
  background: linear-gradient(#fbfbfb, #ededed);
}

.tree {
  flex: 1;
  margin: 0;
  padding: 0 0 0 23px;
  list-style: none;
  border: 1px solid #828790;
  background: #fff;
}

.tree li { display: flex; align-items: center; gap: 3px; height: 20px; }

.picked {
  padding: 0 2px;
  background: #0078d7;
  color: #fff;
  font-weight: 700;
  line-height: 18px;
}

.note {
  position: absolute;
  font: 700 64px/64px "Liberation Sans", Arial, sans-serif;
}

.note-one { left: 159px; top: 75px; font-family: Roboto, sans-serif; }
.note-two { left: 47px; top: 154px; }
.note-three { left: 332px; top: 171px; }

.floatbar {
  position: absolute;
  left: 221px;
  top: 98px;
  border: 2px solid #888;
  background: #f5f5f5;
}

.floatbar header {
  display: flex;
  align-items: center;
  height: 16px;
  margin: 1px 1px 0;
  padding: 0 3px 0 2px;
  background: #a0a0a0;
  color: #fff;
}

.floatbar h2 { flex: 1; }
.floatbar header .drop { height: 14px; }
.shut { margin-left: 4px; }
.shut svg { width: 10px; height: 10px; fill: none; stroke: #fff; stroke-width: 2; }

.floattools {
  display: flex;
  align-items: center;
  padding: 0 1px 1px;
  background: linear-gradient(#fbfbfb, #ededed);
}

/* layout view */

.view {
  display: grid;
  grid-template: 19px 1fr 16px / 19px 1fr 17px;
  padding: 1px 0 0 1px;
  border: 1px solid #a0a0a0;
  border-right-color: #e3e3e3;
  border-bottom-color: #e3e3e3;
  box-shadow: inset 1px 1px 0 #696969;
  background: #f0f0f0;
  min-width: 0;
  min-height: 0;
}

.hruler { grid-area: 1 / 2; padding: 2px 0 0 140px; }
.vruler { grid-area: 2 / 1; padding: 28px 0 0 2px; overflow: hidden; }

.hscale, .vscale {
  border: 1px solid #a0a0a0;
  background: #fff;
  font: 12px "Liberation Sans", Arial, sans-serif;
  shape-rendering: crispEdges;
}

.hscale { width: 399px; height: 17px; }
.vscale { width: 17px; height: 518px; }

.canvas {
  grid-area: 2 / 2;
  position: relative;
  overflow: hidden;
  background: #fff;
  border: 1px solid #a0a0a0;
  border-right-color: #e3e3e3;
  border-bottom-color: #e3e3e3;
  box-shadow: inset 1px 1px 0 #696969;
}

.page {
  position: absolute;
  left: 138px;
  top: 27px;
  width: 402px;
  height: 519px;
  border: 1px dotted #000;
  background: #fff;
  box-shadow: 5px 5px 0 #808080;
}

.frame {
  position: absolute;
  left: 35px;
  top: 34px;
  right: 34px;
  bottom: 34px;
  background:
    repeating-linear-gradient(90deg, #000 0 5px, #14c9c9 5px 8px) top / 100% 1px no-repeat,
    repeating-linear-gradient(90deg, #000 0 5px, #14c9c9 5px 8px) bottom / 100% 1px no-repeat,
    repeating-linear-gradient(#000 0 4px, #14c9c9 4px 7px) left / 1px 100% no-repeat,
    repeating-linear-gradient(#000 0 3px, #14c9c9 3px 6px) right / 1px 100% no-repeat;
}

.handle {
  position: absolute;
  width: 7px;
  height: 7px;
  border: 1px solid #000;
  background: #14c9c9;
}

.nw, .n, .ne { top: -3px; }
.sw, .s, .se { bottom: -3px; }
.nw, .w, .sw { left: -3px; }
.ne, .e, .se { right: -3px; }
.n, .s { left: calc(50% - 3px); }
.w, .e { top: calc(50% - 4px); }

.framename {
  position: absolute;
  left: 50%;
  top: 50%;
  transform: translate(-50%, -50%);
  padding: 0 5px;
  border: 1px solid #000;
  background: #fffff0;
  font: 15px/21px "Liberation Sans", Arial, sans-serif;
}

.vscroll { grid-area: 1 / 3 / 3 / 4; padding: 134px 0 134px 8px; }
.vthumb { width: 2px; height: 100%; background: #858585; }

.viewfoot {
  grid-area: 3 / 1 / 4 / 4;
  display: flex;
  align-items: center;
  padding-left: 1px;
}

.mini { width: 16px; height: 16px; display: grid; place-items: center; margin-right: 1px; }
.mini svg { width: 12px; height: 12px; }
.chosen { background: #cce8ff; border: 1px solid #99d1ff; border-radius: 2px; }
.bar { width: 1px; height: 13px; margin: 0 4px 0 2px; background: #808080; }
.hscroll { flex: 1; padding: 0 67px 0 50px; }
.hthumb { height: 2px; background: #858585; }

.tabs {
  display: flex;
  flex-direction: column;
  padding: 2px 0 0 3px;
  background: #fcfcfc;
}

.tabs button {
  display: flex;
  flex-direction: column;
  align-items: center;
  gap: 4px;
  padding: 4px 2px 5px 0;
  border: 1px solid #a0a0a0;
  border-right: 0;
  border-radius: 4px 0 0 4px;
  background: #f3f3f3;
  color: #666;
  font: 12px/16px "Liberation Sans", Arial, sans-serif;
}

.tabs button + button { margin-top: -1px; }
.tabs span { writing-mode: vertical-rl; }

.status { display: flex; height: 21px; padding: 2px 0; background: #f0f0f0; }
.cell { border: 1px solid #f6f6f6; margin-right: 2px; }
.wide { width: 127px; margin-left: 742px; }
.small { width: 18px; }
.rest { flex: 1; }
.coords { width: 259px; padding-left: 4px; }
.sizer { width: 9px; height: 9px; margin: 8px 1px 0 6px; fill: #bbb; align-self: start; }
```
